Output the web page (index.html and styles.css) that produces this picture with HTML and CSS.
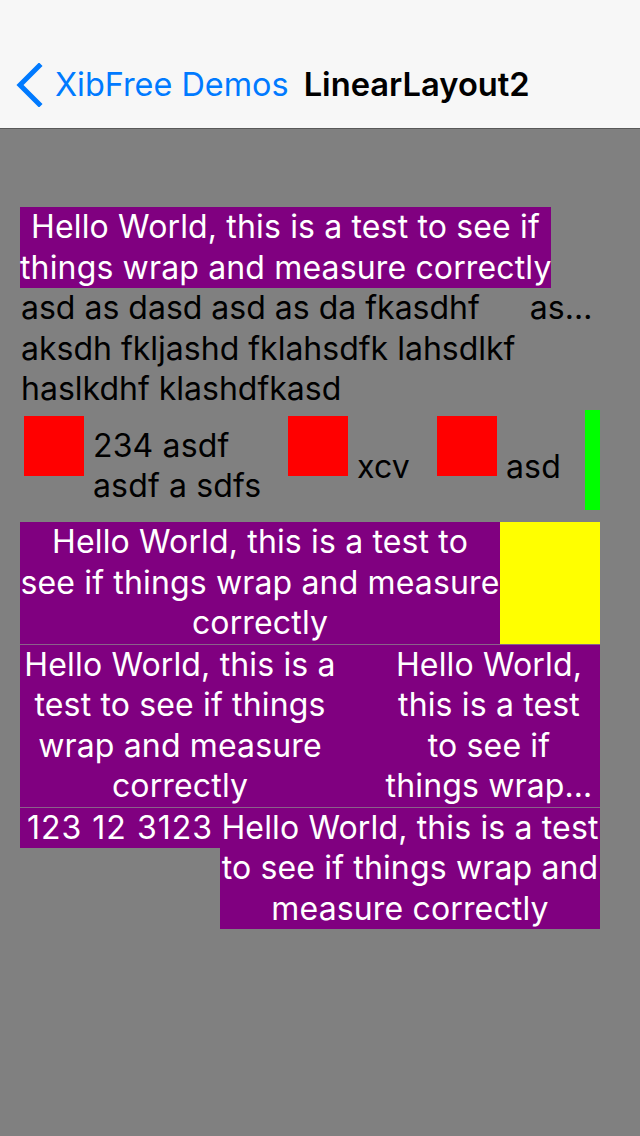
FILE: index.html
```html
<!DOCTYPE html>
<html>
<head>
<meta charset="utf-8">
<title>LinearLayout2</title>
<link rel="stylesheet" href="styles.css">
</head>
<body>
<header class="nav">
  <div class="back">
    <svg class="chevron" width="30" height="44" viewBox="0 0 30 44"><polyline points="24,3 5,22 24,41" fill="none" stroke="#007aff" stroke-width="5" stroke-linecap="square" stroke-linejoin="miter"/></svg>
    <span class="back-label">XibFree Demos</span>
  </div>
  <div class="title">LinearLayout2</div>
</header>
<main class="content">
  <div class="hello1"><span class="ln">Hello World, this is a test to see if</span><span class="ln">things wrap and measure correctly</span></div>
  <div class="para"><span class="ln">asd as dasd asd as da fkasdhf<span class="tail">as…</span></span><span class="ln">aksdh fkljashd fklahsdfk lahsdlkf</span><span class="ln">haslkdhf klashdfkasd</span></div>
  <div class="row3">
    <div class="sq"></div>
    <div class="t1"><span class="ln">234 asdf</span><span class="ln">asdf a sdfs</span></div>
    <div class="sq"></div>
    <div class="t2">xcv</div>
    <div class="sq"></div>
    <div class="t3">asd</div>
    <div class="green"></div>
  </div>
  <div class="row4">
    <div class="r4text"><span class="ln">Hello World, this is a test to</span><span class="ln">see if things wrap and measure</span><span class="ln">correctly</span></div>
    <div class="yellow"></div>
  </div>
  <div class="row5">
    <div class="col-left"><span class="ln">Hello World, this is a</span><span class="ln">test to see if things</span><span class="ln">wrap and measure</span><span class="ln">correctly</span></div>
    <div class="col-right"><span class="ln">Hello World,</span><span class="ln">this is a test</span><span class="ln">to see if</span><span class="ln">things wrap…</span></div>
  </div>
  <div class="row6">
    <div class="num">123 12 3123</div>
    <div class="r6text"><span class="ln">Hello World, this is a test</span><span class="ln">to see if things wrap and</span><span class="ln">measure correctly</span></div>
  </div>
</main>
</body>
</html>
```
FILE: styles.css
```css
html, body {
  margin: 0;
  padding: 0;
}
body {
  width: 640px;
  height: 1136px;
  background: #808080;
  font-family: Inter, Roboto, "Liberation Sans", sans-serif;
  overflow: hidden;
}
.nav {
  height: 128px;
  box-sizing: border-box;
  padding-top: 40px;
  background: #f7f7f7;
  box-shadow: 0 1px 0 rgba(0, 0, 0, 0.3);
  display: flex;
  align-items: center;
  position: relative;
  z-index: 1;
}
.back {
  display: flex;
  align-items: center;
  margin-left: 15px;
}
.chevron {
  display: block;
  margin-top: 2px;
}
.back-label {
  margin-left: 10px;
  color: #007aff;
  font-size: 32.4px;
}
.title {
  margin-left: 15px;
  color: #000;
  font-size: 32.7px;
  font-weight: 600;
}
.content {
  padding: 79px 40px 0 20px;
  font-size: 32px;
  line-height: 40.5px;
  letter-spacing: 0.15px;
}
.ln {
  display: block;
  white-space: nowrap;
}
.hello1 {
  width: 531px;
  background: #800080;
  color: #fff;
  text-align: center;
}
.para {
  color: #000;
  padding-left: 1px;
  letter-spacing: 0;
}
.tail {
  margin-left: 50px;
}
.row3 {
  display: flex;
  align-items: flex-start;
  height: 100px;
  color: #000;
}
.sq {
  width: 60px;
  height: 60px;
  background: #ff0000;
  margin: 6px 0 0 4px;
  flex: none;
}
.t1 {
  width: 191px;
  margin: 16px 0 0 9px;
  flex: none;
}
.t2 {
  width: 76px;
  margin: 37px 0 0 9px;
  flex: none;
}
.t3 {
  width: 79px;
  margin: 37px 0 0 9px;
  flex: none;
}
.green {
  width: 15px;
  height: 100px;
  background: #00ff00;
  flex: none;
}
.row4 {
  display: flex;
  margin-top: 12.5px;
}
.r4text {
  width: 480px;
  background: #800080;
  color: #fff;
  text-align: center;
}
.yellow {
  flex: 1;
  background: #ffff00;
}
.row5 {
  display: flex;
  background: #800080;
  color: #fff;
  text-align: center;
  border-top: 1px solid #8a628a;
}
.col-left {
  width: 320px;
}
.col-right {
  flex: 1;
  padding-left: 38px;
}
.row6 {
  display: flex;
  align-items: flex-start;
  color: #fff;
  text-align: center;
}
.num {
  width: 200px;
  background: #800080;
  border-top: 1px solid #8a628a;
  letter-spacing: 1px;
}
.r6text {
  flex: 1;
  background: #800080;
  border-top: 1px solid #8a628a;
}
```
